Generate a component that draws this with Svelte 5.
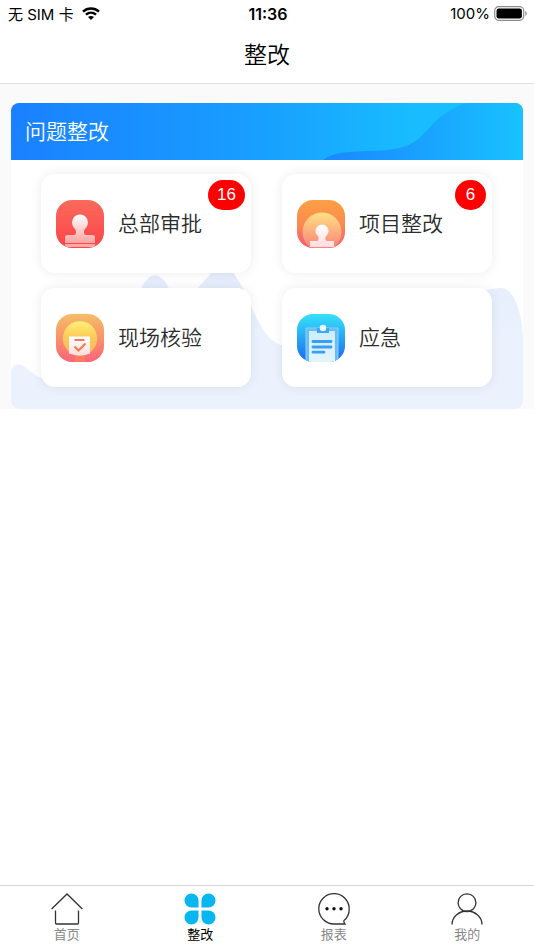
<script>
	const entries = [
		{ id: 'approve', label: '总部审批', badge: 16 },
		{ id: 'project', label: '项目整改', badge: 6 },
		{ id: 'verify', label: '现场核验', badge: 0 },
		{ id: 'urgent', label: '应急', badge: 0 }
	];

	const tabs = [
		{ id: 'home', label: '首页' },
		{ id: 'rectify', label: '整改' },
		{ id: 'report', label: '报表' },
		{ id: 'mine', label: '我的' }
	];

	let activeTab = 'rectify';
</script>

<svelte:head>
	<title>整改</title>
</svelte:head>

<div class="app">
	<div class="status">
		<div class="carrier">
			<span>无 SIM 卡</span>
			<svg width="18" height="13" viewBox="0 0 18 13">
				<g fill="none" stroke="#000" stroke-width="2.4">
					<path d="M1 4.6C5.5 .4 12.5 .4 17 4.6" />
					<path d="M3.9 7.7c3-2.7 7.2-2.7 10.2 0" />
				</g>
				<path d="M9 13 6 10.1c1.7-1.5 4.3-1.5 6 0z" />
			</svg>
		</div>
		<div class="time">11:36</div>
		<div class="power">
			<span>100%</span>
			<svg width="34" height="15" viewBox="0 0 34 15">
				<rect x=".7" y=".7" width="29" height="13.6" rx="4" fill="none" stroke="#8c8c8c" stroke-width="1.2" />
				<rect x="2.5" y="2.5" width="25.4" height="10" rx="2.3" />
				<path d="M31.3 5v5c1.900-.8 1.900-4.200 0-5z" fill="#8c8c8c" />
			</svg>
		</div>
	</div>

	<header>
		<h1>整改</h1>
	</header>

	<main>
		<section class="panel">
			<div class="banner">
				<svg class="swoosh" viewBox="0 0 201 57" preserveAspectRatio="none">
					<defs>
						<linearGradient id="swoosh" x1="0" x2="1" y1="0" y2="0">
							<stop offset="0" stop-color="#1a88ff" />
							<stop offset=".45" stop-color="#199fff" />
							<stop offset="1" stop-color="#18c2ff" />
						</linearGradient>
					</defs>
					<path d="M0 57c6-4 12-7 26-8 26-2 44 0 60-7 18-8 22-24 44-36 7-4 13-6 20-6h51v57z" fill="url(#swoosh)" />
				</svg>
				<h2>问题整改</h2>
			</div>

			<div class="body">
				<svg class="hills" viewBox="0 0 512 249" preserveAspectRatio="none">
					<defs>
						<linearGradient id="hills" x1="0" x2="0" y1="0" y2="1">
							<stop offset="0" stop-color="#e4ecfc" />
							<stop offset=".5" stop-color="#ebf2fe" />
						</linearGradient>
					</defs>
					<path
						d="M0 249v-38c2-8 9-8 15-3 10 8 14 11 24 11 45 0 68-53 90-89q15-30 30 0c8 14 18 14 26 0l16-18q10-17 21 0l10 16 9 20c10 23 20 38 36 38h60c80 0 110-58 153-58 12 0 20 20 22 47v74z"
						fill="url(#hills)"
					/>
				</svg>
				{#each entries as entry}
					<button class="entry" type="button">
						<svg class="icon" viewBox="0 0 48 48">
							<defs>
								<clipPath id="clip-{entry.id}"><rect width="48" height="48" rx="16" /></clipPath>
								<linearGradient id="bg-{entry.id}" x1="0" x2="0" y1="0" y2="1">
									{#if entry.id === 'approve'}
										<stop offset="0" stop-color="#fb6a5c" />
										<stop offset="1" stop-color="#fb4548" />
									{:else if entry.id === 'project'}
										<stop offset="0" stop-color="#fda043" />
										<stop offset=".5" stop-color="#fb8a50" />
										<stop offset="1" stop-color="#f85874" />
									{:else if entry.id === 'verify'}
										<stop offset="0" stop-color="#f6bd66" />
										<stop offset=".5" stop-color="#fa926b" />
										<stop offset="1" stop-color="#fb6379" />
									{:else}
										<stop offset="0" stop-color="#35e2f9" />
										<stop offset="1" stop-color="#1d68f0" />
									{/if}
								</linearGradient>
								<linearGradient id="fg-{entry.id}" x1="0" x2="0" y1="0" y2="1">
									{#if entry.id === 'approve'}
										<stop offset="0" stop-color="#fff" />
										<stop offset="1" stop-color="#ffa3a3" />
									{:else if entry.id === 'project'}
										<stop offset="0" stop-color="#ffe083" />
										<stop offset="1" stop-color="#fa7a78" />
									{:else if entry.id === 'verify'}
										<stop offset="0" stop-color="#fff17a" />
										<stop offset=".4" stop-color="#fccf58" />
										<stop offset="1" stop-color="#fbb360" />
									{:else}
										<stop offset="0" stop-color="#cdeefe" />
										<stop offset="1" stop-color="#e2f5ff" />
									{/if}
								</linearGradient>
								<linearGradient id="paper-{entry.id}" x1="0" x2="0" y1="0" y2="1">
									<stop offset="0" stop-color="#fff" />
									<stop offset="1" stop-color="#ffdcde" />
								</linearGradient>
							</defs>
							<g clip-path="url(#clip-{entry.id})">
								<rect width="48" height="48" fill="url(#bg-{entry.id})" />
								{#if entry.id === 'approve'}
									<path
										d="M24 14.500a8 8 0 0 1 8 8c0 3-1.500 5-3 6.500-1 1-1 2-1 3.500 0 2 1 2.500 3 2.500h6a2 2 0 0 1 2 2v6H9v-6a2 2 0 0 1 2-2h6c2 0 3-.5 3-2.500 0-1.500 0-2.500-1-3.500-1.500-1.500-3-3.500-3-6.500a8 8 0 0 1 8-8z"
										fill="url(#fg-approve)"
									/>
									<rect x="9" y="44" width="30" height="3" fill="#ffa8a8" />
								{:else if entry.id === 'project'}
									<circle cx="25" cy="32" r="19.5" fill="url(#fg-project)" />
									<path
										d="M25 24.500a6.500 6.500 0 0 1 6.500 6.500c0 2.500-1.200 4-2.500 5.200-1 1-1 4.800 1.500 4.800H37v6H13v-6h6.500c2.500 0 2.500-3.800 1.500-4.800-1.300-1.200-2.500-2.700-2.500-5.200a6.500 6.500 0 0 1 6.500-6.500z"
										fill="url(#paper-project)"
									/>
								{:else if entry.id === 'verify'}
									<path d="M19 40h10v8H19z" fill="#fa8a58" opacity=".6" />
									<circle cx="24" cy="24.5" r="17.2" fill="url(#fg-verify)" />
									<path d="M13 22.500h21v17q-10 4-21 0z" fill="url(#paper-verify)" />
									<path d="M18.500 26h10M18.500 32.500l4 4 7-7" fill="none" stroke="#f67a50" stroke-width="2" />
								{:else}
									<path d="M9 48V14h32v34z" fill="#65bbfc" stroke="#8ad2fd" />
									<path d="M12 48V17h26v31z" fill="url(#fg-urgent)" />
									<path d="M20 14h12v5H20z" fill="#3ba5f6" />
									<circle cx="26" cy="14" r="3.3" fill="#e9faff" />
									<g stroke="#3b9df5" stroke-width="2.8" stroke-linecap="round">
										<path d="M16 27.500h18M16 33h18M16 38.200h11" />
									</g>
								{/if}
							</g>
						</svg>
						<span class="label">{entry.label}</span>
						{#if entry.badge}
							<span class="badge">{entry.badge}</span>
						{/if}
					</button>
				{/each}
			</div>
		</section>
	</main>

	<nav>
		{#each tabs as tab}
			<button type="button" class="tab" class:active={activeTab === tab.id} on:click={() => (activeTab = tab.id)}>
				<svg width="32" height="32" viewBox="0 0 32 32" fill="none" stroke="#333" stroke-width="1.3">
					{#if tab.id === 'home'}
						<path d="M.6 16 16 1l15.400 15M4.500 17.500V30q0 1 1 1h21q1 0 1-1V17.500" />
					{:else if tab.id === 'rectify'}
						<g fill="#08b6f0" stroke="none">
							<path d="M14.500 14.500H7.500a7 7 0 1 1 7-7z" />
							<path d="M17.500 14.500v-7a7 7 0 1 1 7 7z" />
							<path d="M14.500 17.500v7a7 7 0 1 1-7-7z" />
							<path d="M17.500 17.500h7a7 7 0 1 1-7 7z" />
						</g>
					{:else if tab.id === 'report'}
						<path d="M27 31H16A15.200 15.200 0 1 1 31.200 16c0 5-2 9-5.200 11.500-.6 1 .2 2.300 1 3.500z" />
						<g fill="#111" stroke="none">
							<circle cx="9" cy="15.7" r="1.7" />
							<circle cx="16" cy="15.7" r="1.7" />
							<circle cx="23" cy="15.7" r="1.7" />
						</g>
					{:else}
						<circle cx="16" cy="9.7" r="8.9" />
						<path d="M1 31.500a15 13.500 0 0 1 30 0" />
					{/if}
				</svg>
				<span>{tab.label}</span>
			</button>
		{/each}
	</nav>
</div>

<style>
	:global(body) {
		margin: 0;
		background: #fff;
	}

	.app {
		display: flex;
		flex-direction: column;
		min-height: 100vh;
		font-family: Inter, 'Noto Sans CJK SC', sans-serif;
		color: #2b2b2b;
	}

	button {
		font: inherit;
		color: inherit;
		border: none;
		padding: 0;
		cursor: pointer;
	}

	.status {
		display: grid;
		grid-template-columns: 1fr auto 1fr;
		align-items: center;
		height: 27px;
		padding: 0 6px 0 8px;
		font-size: 15px;
		color: #000;
	}

	.carrier,
	.power {
		display: flex;
		align-items: center;
		gap: 8px;
	}

	.power {
		justify-content: flex-end;
		gap: 4px;
	}

	.time {
		font-size: 16px;
		font-weight: 600;
	}

	header {
		display: flex;
		align-items: center;
		justify-content: center;
		box-sizing: border-box;
		height: 57px;
		padding-bottom: 4px;
		border-bottom: 1px solid #dedede;
	}

	h1,
	h2 {
		margin: 0;
		font-weight: 350;
	}

	h1 {
		font-size: 23px;
		color: #000;
	}

	main {
		padding: 19px 11px 0;
		background: #fafafa;
	}

	.panel {
		border-radius: 8px;
		overflow: hidden;
		background: #fff;
	}

	.banner {
		position: relative;
		display: flex;
		align-items: center;
		height: 57px;
		padding: 0 14px;
		background: linear-gradient(90deg, #1a80ff, #18a0ff 50%, #18bcff 78%, #18c2ff);
	}

	.swoosh {
		position: absolute;
		right: 0;
		bottom: 0;
		width: 39%;
		height: 100%;
	}

	h2 {
		position: relative;
		padding-bottom: 4px;
		font-size: 21px;
		color: #fff;
	}

	.body {
		position: relative;
		display: grid;
		grid-template-columns: 1fr 1fr;
		gap: 15px 31px;
		padding: 14px 31px 22px 30px;
	}

	.hills {
		position: absolute;
		inset: 0;
		width: 100%;
		height: 100%;
	}

	.entry {
		position: relative;
		display: flex;
		align-items: center;
		gap: 14px;
		height: 99px;
		padding: 0 15px;
		border-radius: 14px;
		background: #fff;
		box-shadow: 0 0 12px rgba(0, 0, 0, 0.08);
		font-size: 21px;
		font-weight: 350;
	}

	.icon {
		width: 48px;
		height: 48px;
	}

	.label {
		padding-bottom: 3px;
	}

	.badge {
		position: absolute;
		top: 6px;
		right: 6px;
		min-width: 13px;
		padding: 0 9px;
		border-radius: 15px;
		background: #f00;
		color: #fff;
		font-family: 'Liberation Sans', sans-serif;
		font-size: 17px;
		font-weight: 400;
		line-height: 30px;
		text-align: center;
	}

	nav {
		display: flex;
		margin-top: auto;
		height: 64px;
		border-top: 1px solid #d4d4d4;
	}

	.tab {
		display: flex;
		flex: 1;
		flex-direction: column;
		align-items: center;
		padding-top: 7px;
		background: none;
		color: #888;
		font-size: 13px;
		line-height: 18px;
	}

	.active {
		color: #000;
	}
</style>
